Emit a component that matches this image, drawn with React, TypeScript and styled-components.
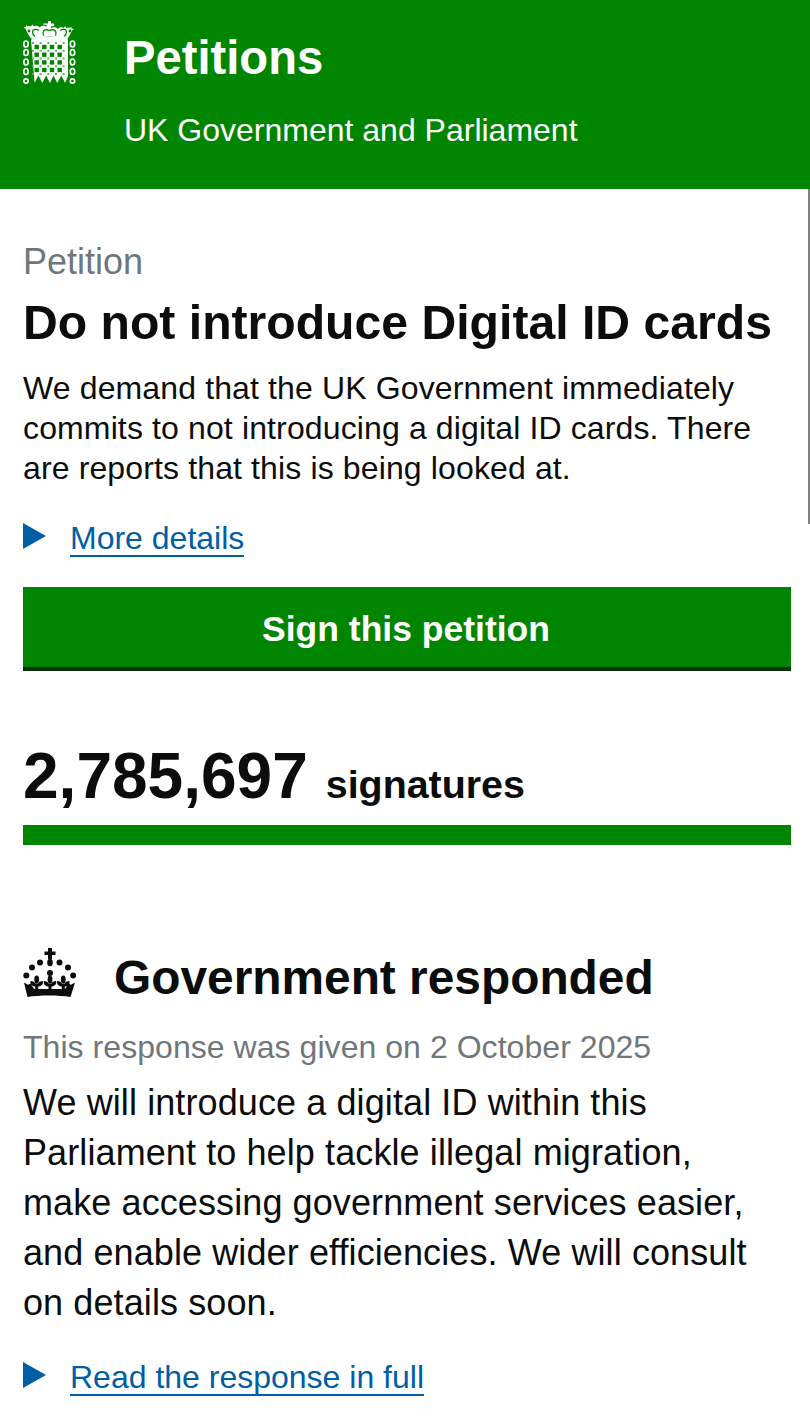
import React from "react";
import styled, { createGlobalStyle } from "styled-components";

const Global = createGlobalStyle`
  html, body { margin: 0; padding: 0; background: #fff; }
  body { font-family: "Liberation Sans", Arial, sans-serif; color: #0b0c0c; }
`;
const Page = styled.div`
  position: relative;
  width: 810px;
  height: 1420px;
  overflow: hidden;
`;
const Scroll = styled.div`
  position: absolute;
  right: 0;
  top: 189px;
  width: 2px;
  height: 335px;
  background: #808080;
`;
const Header = styled.header`
  height: 189px;
  box-sizing: border-box;
  background: #008500;
  color: #fff;
  display: flex;
  padding: 21px 0 0 23px;
`;
const Brand = styled.div`
  margin-left: 48px;
  padding-top: 1px;
  display: flex;
  flex-direction: column;
`;
const Title = styled.div`
  font-size: 47.2px;
  font-weight: 700;
  line-height: 72px;
`;
const Sub = styled.div`
  font-size: 32px;
  line-height: 36px;
  margin-top: 18px;
`;
const Main = styled.main`
  padding: 0 19px 0 23px;
`;
const Kicker = styled.div`
  color: #6f777b;
  font-size: 36px;
  line-height: 40px;
  margin-top: 53px;
`;
const H1 = styled.h1`
  margin: 14px 0 0;
  font-size: 48.15px;
  font-weight: 700;
  line-height: 52px;
`;
const Lead = styled.p`
  margin: 20px 0 0;
  font-size: 32px;
  line-height: 40px;
  letter-spacing: 0.13px;
`;
const Disclosure = styled.div<{ $top: number }>`
  display: flex;
  align-items: center;
  margin-top: ${(p) => p.$top}px;
  height: 40px;
`;
const Arrow = styled.span`
  width: 0;
  height: 0;
  border-left: 23px solid #005ea5;
  border-top: 13.5px solid transparent;
  border-bottom: 13.5px solid transparent;
  margin: 0 24px 6px 0;
`;
const Link = styled.a`
  color: #005ea5;
  font-size: 32px;
  line-height: 34px;
  border-bottom: 2px solid #005ea5;
`;
const Button = styled.div`
  margin-top: 28px;
  height: 84px;
  box-sizing: border-box;
  background: #008500;
  border-bottom: 4px solid #003300;
  color: #fff;
  font-size: 35.5px;
  font-weight: 700;
  display: flex;
  align-items: center;
  justify-content: center;
  padding: 4px 2px 0 0;
`;
const Count = styled.div`
  display: flex;
  align-items: baseline;
  margin-top: 63px;
  height: 84px;
`;
const Number = styled.span`
  font-size: 64px;
  font-weight: 700;
  line-height: 84px;
  margin-right: 18px;
`;
const Unit = styled.span`
  font-size: 39.4px;
  font-weight: 700;
`;
const Bar = styled.div`
  height: 20px;
  margin-top: 7px;
  background: #008500;
`;
const RespHead = styled.div`
  display: flex;
  align-items: center;
  margin-top: 100px;
  height: 66px;
`;
const Crown = styled.svg`
  width: 53px;
  height: 50px;
  margin: 0 38px 10px 0;
  flex: none;
`;
const H2 = styled.h2`
  margin: 0;
  font-size: 47.85px;
  font-weight: 700;
  line-height: 66px;
`;
const Given = styled.div`
  color: #6f777b;
  font-size: 32px;
  line-height: 40px;
  letter-spacing: 0.05px;
  margin-top: 16px;
`;
const Body = styled.p`
  margin: 11px 0 0;
  font-size: 36px;
  line-height: 50px;
  letter-spacing: 0.1px;
`;

const PortcullisLogo = styled.svg`
  width: 53px;
  height: 65px;
  flex: none;
`;

function Portcullis() {
  const large: React.ReactNode[] = [];
  const xs = [13.7, 21.3, 29, 36.7];
  const ys = [26, 33.7, 41.4, 49];
  ys.forEach((y, r) =>
    xs.forEach((x, c) =>
      large.push(<rect key={`l${r}${c}`} x={x - 2.2} y={y - 2.2} width={4.4} height={4.4} fill="#008500" />)
    )
  );
  const small: React.ReactNode[] = [];
  [10, 17.6, 25.3, 33, 40.6].forEach((x, c) =>
    [22, 29.8, 37.5, 45.2, 53].forEach((y, r) =>
      small.push(<rect key={`s${r}${c}`} x={x - 1} y={y - 1} width={2} height={2} fill="#5fb25f" />)
    )
  );
  const links: React.ReactNode[] = [];
  [3, 49.5].forEach((x) =>
    [23, 31.5, 41, 50.5, 60].forEach((y, i) =>
      links.push(
        <ellipse key={`${x}${i}`} cx={x} cy={y} rx={2.2} ry={i === 4 ? 2.2 : 3} fill="none" stroke="#fff" strokeWidth={1.7} />
      )
    )
  );
  return (
    <PortcullisLogo viewBox="0 0 53 65">
      <g fill="#fff">
        <path d="M25 0h3v2.500h3.200v2.800H28v2c2.600 -1.600 5.500 -1.200 6.700 .8 1.500 -2 4 -2.400 6 -1.200l1.600 -2 1.100 2.300c1.400 -.8 2.600 -.8 3.700 -.2l.9 -1.600.6 2 2.400 .6-1.800 1.200c-1.300 3 -3 6.200 -5 9.200l-3 1.800C35.700 16.200 31 15.500 26.500 15.500S17.300 16.200 10.300 18.600l-3 -1.800c-2 -3 -3.700 -6.200 -5 -9.200L.5 6.400l2.400 -.6.6 -2 .9 1.600c1.100 -.6 2.300 -.6 3.700 .2l1.100 -2.300 1.600 2c2 -1.200 4.500 -.8 6 1.200 1.200 -2 4.100 -2.400 6.700 -.8v-2h-3.200V2.500H25z" />
        <path d="M8 18.500c11 -4 26 -4 37 0V55l-2.800 7-3.900-7.500-4 7.500-3.800-7.500-3.500 7.500-3.900-7.500-3.800 7.500-4-7.500-3.700 7.500z" />
      </g>
      <g fill="none" stroke="#008500" strokeWidth="1.300">
        <path d="M26.500 9.500c-3 -1.500 -6.500 -.8 -6.500 2.500 0 1.300 .5 2.300 1 2.500" />
        <path d="M26.500 9.500c3 -1.500 6.500 -.8 6.500 2.500 0 1.300 -.5 2.300 -1 2.500" />
        <path d="M16 9.500c-3 -2 -6.500 -1.200 -6.500 1.500 0 2 1 3.500 2.500 4.500" />
        <path d="M37 9.500c3 -2 6.500 -1.200 6.500 1.500 0 2 -1 3.500 -2.500 4.500" />
      </g>
      <g fill="#008500">
        <circle cx="6" cy="10" r="1.400" />
        <circle cx="47" cy="10" r="1.400" />
      </g>
      {large}
      {small}
      {links}
    </PortcullisLogo>
  );
}

function Fleur({ x }: { x: number }) {
  return (
    <g fill="#0b0c0c">
      <ellipse cx={x} cy={31.5} rx={2.4} ry={4} />
      <path d={`M${x - 6} 33c2.200 0 4.200 1 4.500 2.500h3c.3 -1.500 2.300 -2.500 4.500 -2.500 1 2.200 -.5 5 -4 5.500H${x - 2}c-3.500 -.5 -5 -3.300 -4 -5.500z`} />
      <rect x={x - 1.500} y={36} width={3} height={7} />
    </g>
  );
}

function GovCrown() {
  return (
    <Crown viewBox="0 0 53 50">
      <g fill="#0b0c0c">
        <path d="M25 0h4v3.500h3.500v3.500H29v4h-4V7h-3.500V3.500H25z" />
        <ellipse cx="27" cy="14.500" rx="2.800" ry="3.800" />
        <circle cx="17" cy="14.500" r="3" />
        <circle cx="36.500" cy="14.500" r="3" />
        <circle cx="9" cy="19.500" r="3" />
        <circle cx="45" cy="19.500" r="3" />
        <circle cx="27" cy="25" r="3" />
        <circle cx="3.300" cy="27.500" r="3" />
        <circle cx="50.200" cy="27.500" r="3" />
        <path d="M1 34.500l4 2.300 2.500 -1.300 3.500 5.500h31l3.500-5.500 2.500 1.300 4-2.300-4.500 14.500c-11-2-32-2-43 0z" />
      </g>
      <Fleur x={13.700} />
      <Fleur x={27} />
      <Fleur x={40.300} />
    </Crown>
  );
}

export default function App() {
  return (
    <Page>
      <Global />
      <Header>
        <Portcullis />
        <Brand>
          <Title>Petitions</Title>
          <Sub>UK Government and Parliament</Sub>
        </Brand>
      </Header>
      <Main>
        <Kicker>Petition</Kicker>
        <H1>Do not introduce Digital ID cards</H1>
        <Lead>
          We demand that the UK Government immediately
          <br />
          commits to not introducing a digital ID cards. There
          <br />
          are reports that this is being looked at.
        </Lead>
        <Disclosure $top={31}>
          <Arrow />
          <Link>More details</Link>
        </Disclosure>
        <Button>Sign this petition</Button>
        <Count>
          <Number>2,785,697</Number>
          <Unit>signatures</Unit>
        </Count>
        <Bar />
        <RespHead>
          <GovCrown />
          <H2>Government responded</H2>
        </RespHead>
        <Given>This response was given on 2 October 2025</Given>
        <Body>
          We will introduce a digital ID within this
          <br />
          Parliament to help tackle illegal migration,
          <br />
          make accessing government services easier,
          <br />
          and enable wider efficiencies. We will consult
          <br />
          on details soon.
        </Body>
        <Disclosure $top={30}>
          <Arrow />
          <Link>Read the response in full</Link>
        </Disclosure>
      </Main>
      <Scroll />
    </Page>
  );
}
